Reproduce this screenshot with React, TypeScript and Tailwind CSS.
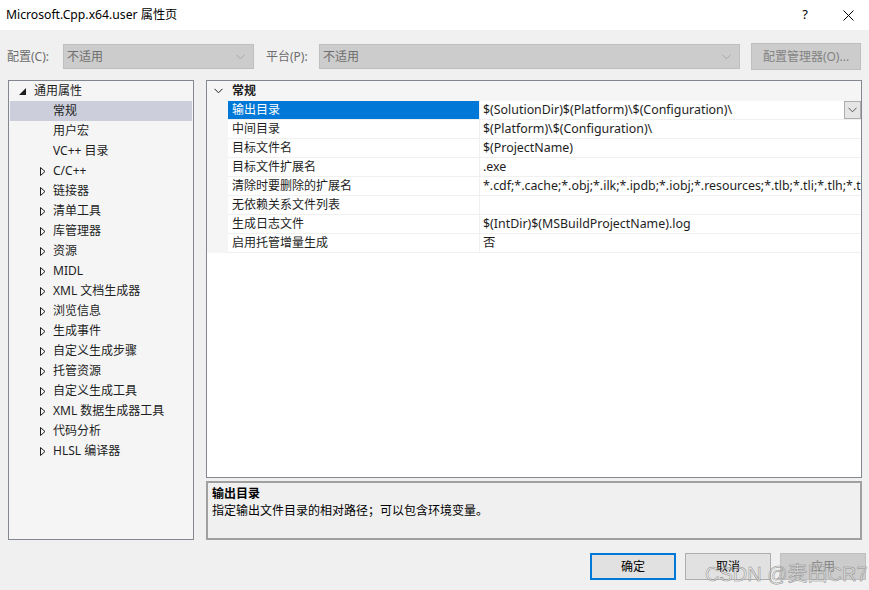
import type { ReactNode } from 'react'

const font = { fontFamily: '"Segoe UI", "Noto Sans", "Noto Sans CJK SC", sans-serif' }

type TreeItem = { label: string; level: 0 | 1; expander?: 'open' | 'closed'; selected?: boolean }

const treeItems: TreeItem[] = [
  { label: '通用属性', level: 0, expander: 'open' },
  { label: '常规', level: 1, selected: true },
  { label: '用户宏', level: 1 },
  { label: 'VC++ 目录', level: 1 },
  { label: 'C/C++', level: 1, expander: 'closed' },
  { label: '链接器', level: 1, expander: 'closed' },
  { label: '清单工具', level: 1, expander: 'closed' },
  { label: '库管理器', level: 1, expander: 'closed' },
  { label: '资源', level: 1, expander: 'closed' },
  { label: 'MIDL', level: 1, expander: 'closed' },
  { label: 'XML 文档生成器', level: 1, expander: 'closed' },
  { label: '浏览信息', level: 1, expander: 'closed' },
  { label: '生成事件', level: 1, expander: 'closed' },
  { label: '自定义生成步骤', level: 1, expander: 'closed' },
  { label: '托管资源', level: 1, expander: 'closed' },
  { label: '自定义生成工具', level: 1, expander: 'closed' },
  { label: 'XML 数据生成器工具', level: 1, expander: 'closed' },
  { label: '代码分析', level: 1, expander: 'closed' },
  { label: 'HLSL 编译器', level: 1, expander: 'closed' },
]

const properties = [
  { name: '输出目录', value: '$(SolutionDir)$(Platform)\\$(Configuration)\\' },
  { name: '中间目录', value: '$(Platform)\\$(Configuration)\\' },
  { name: '目标文件名', value: '$(ProjectName)' },
  { name: '目标文件扩展名', value: '.exe' },
  {
    name: '清除时要删除的扩展名',
    value: '*.cdf;*.cache;*.obj;*.ilk;*.ipdb;*.iobj;*.resources;*.tlb;*.tli;*.tlh;*.tmp;*.rsp;*.pgc;*.pgd;*.meta;*.tlog;*.manifest;*.res;*.pch;*.exp;*.idb;*.rep;*.xdc;*.pdb;*_manifest.rc;*.bsc;*.sbr;*.xml;*.metagen;*.bi',
  },
  { name: '无依赖关系文件列表', value: '' },
  { name: '生成日志文件', value: '$(IntDir)$(MSBuildProjectName).log' },
  { name: '启用托管增量生成', value: '否' },
]

function Chevron({ className }: { className?: string }) {
  return (
    <svg width="9" height="6" viewBox="0 0 9 6" className={className}>
      <path d="M0.5 0.8 L4.5 4.8 L8.5 0.8" fill="none" stroke="currentColor" strokeWidth="1" />
    </svg>
  )
}

function Expander({ kind }: { kind: 'open' | 'closed' }) {
  if (kind === 'open') {
    return (
      <svg width="7" height="7" viewBox="0 0 7 7">
        <path d="M7 0 L7 7 L0 7 Z" fill="#1e1e1e" />
      </svg>
    )
  }
  return (
    <svg width="6" height="9" viewBox="0 0 6 9">
      <path d="M0.5 0.5 L5 4.5 L0.5 8.5 Z" fill="none" stroke="#1e1e1e" strokeWidth="1" />
    </svg>
  )
}

function DisabledSelect({ text, width }: { text: string; width: string }) {
  return (
    <div className={`${width} h-[25px] bg-[#cccccc] border border-[#bfbfbf] flex items-center justify-between pl-[3px] pr-[8px] text-[#6d6d6d]`}>
      <span>{text}</span>
      <Chevron className="text-[#a8a8a8]" />
    </div>
  )
}

function Button({ children, variant }: { children: ReactNode; variant: 'default' | 'normal' | 'disabled' }) {
  const styles = {
    default: 'border-2 border-[#0078d7] bg-[#e1e1e1] text-[#000]',
    normal: 'border border-[#adadad] bg-[#e1e1e1] text-[#000]',
    disabled: 'border border-[#bfbfbf] bg-[#cccccc] text-[#838383]',
  }
  return (
    <div className={`w-[86px] h-[27px] flex items-center justify-center ${styles[variant]}`}>{children}</div>
  )
}

export default function App() {
  return (
    <div className="w-[869px] h-[590px] bg-[#f0f0f0] flex flex-col text-[12px] text-[#1e1e1e] relative overflow-hidden" style={font}>
      <div className="h-[30px] bg-white flex items-center justify-between pl-[6px] shrink-0">
        <span className="text-[12.2px] text-black">Microsoft.Cpp.x64.user 属性页</span>
        <div className="flex items-center h-full">
          <span className="w-[44px] text-center text-[13px] text-black">?</span>
          <span className="w-[42px] h-full flex items-center justify-center">
            <svg width="11" height="11" viewBox="0 0 11 11">
              <path d="M0.5 0.5 L10.5 10.5 M10.5 0.5 L0.5 10.5" stroke="#000" strokeWidth="1" />
            </svg>
          </span>
        </div>
      </div>

      <div className="flex items-center mt-[13px] pl-[7px] h-[27px] shrink-0">
        <span className="w-[56px] text-[#6d6d6d]">配置(C):</span>
        <DisabledSelect text="不适用" width="w-[191px]" />
        <span className="ml-[12px] w-[53px] text-[#6d6d6d]">平台(P):</span>
        <DisabledSelect text="不适用" width="w-[421px]" />
        <div className="ml-[11px] w-[110px] h-[27px] bg-[#cccccc] border border-[#bfbfbf] flex items-center justify-center text-[#838383]">
          配置管理器(O)...
        </div>
      </div>

      <div className="flex mt-[10px] pl-[8px] h-[460px] shrink-0">
        <div className="w-[186px] h-full border border-[#828790] bg-[#f5f5f5] px-[1px] overflow-hidden">
          {treeItems.map(item => (
            <div
              key={item.label}
              className={`h-[20px] flex items-center ${item.selected ? 'bg-[#cccedb]' : ''}`}
            >
              <span className={`flex items-center ${item.level === 0 ? 'w-[24px] pl-[9px]' : 'w-[43px] pl-[30px]'}`}>
                {item.expander ? <Expander kind={item.expander} /> : null}
              </span>
              <span>{item.label}</span>
            </div>
          ))}
        </div>

        <div className="ml-[12px] w-[656px] h-full flex flex-col">
          <div className="h-[398px] border border-[#828790] bg-white flex flex-col overflow-hidden">
            <div className="h-[20px] bg-[#f5f5f5] flex items-center shrink-0">
              <span className="w-[21px] flex justify-center pl-[2px]">
                <Chevron className="text-[#1e1e1e]" />
              </span>
              <span className="pl-[4px] font-bold">常规</span>
            </div>
            <div className="flex flex-1">
              <div className="w-[21px] bg-[#f5f5f5] h-[152px]" />
              <div className="flex-1 flex flex-col min-w-0">
                {properties.map((prop, index) => (
                  <div key={prop.name} className="h-[19px] flex border-b border-[#f0f0f0]">
                    <div
                      className={`w-[252px] shrink-0 pl-[4px] flex items-center border-r border-[#f0f0f0] ${
                        index === 0 ? 'bg-[#0078d7] text-white' : ''
                      }`}
                    >
                      {prop.name}
                    </div>
                    <div className="flex-1 min-w-0 flex items-center pl-[3px] whitespace-nowrap overflow-hidden relative text-[12.4px]">
                      <span>{prop.value}</span>
                      {index === 0 ? (
                        <span className="absolute right-0 top-0 w-[17px] h-[18px] bg-[#e5e5e5] border border-[#adadad] flex items-center justify-center">
                          <Chevron className="text-[#555]" />
                        </span>
                      ) : null}
                    </div>
                  </div>
                ))}
              </div>
            </div>
          </div>

          <div className="mt-[3px] h-[59px] border-2 border-[#a0a0a0] bg-[#f0f0f0] px-[4px] pt-[2px]">
            <div className="font-bold text-black leading-[17px]">输出目录</div>
            <div className="text-black leading-[18px]">指定输出文件目录的相对路径；可以包含环境变量。</div>
          </div>
        </div>
      </div>

      <div className="flex justify-end gap-[9px] mt-[13px] pr-[3px]">
        <Button variant="default">确定</Button>
        <Button variant="normal">取消</Button>
        <Button variant="disabled">应用</Button>
      </div>

      <div
        className="absolute left-[705px] top-[559px] text-[20px] pointer-events-none"
        style={{ fontFamily: '"Liberation Sans", "Noto Sans CJK SC", sans-serif', WebkitTextStroke: '0.5px #8c8c8c', color: 'rgba(255,255,255,0.35)' }}
      >
        CSDN @麦田CR7
      </div>
    </div>
  )
}
